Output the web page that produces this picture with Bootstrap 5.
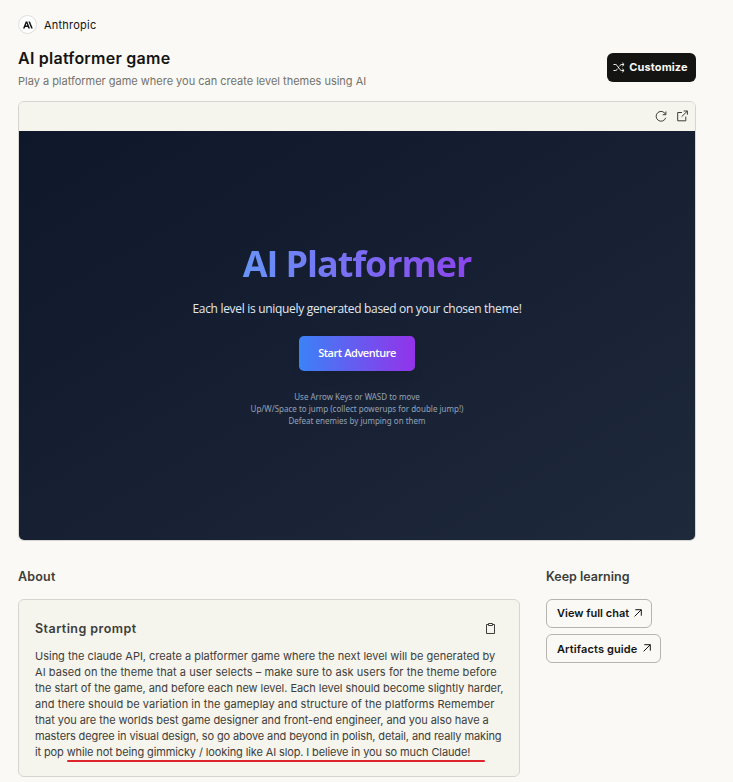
<!DOCTYPE html>
<html lang="en">
<head>
    <meta charset="UTF-8">
    <meta name="viewport" content="width=device-width, initial-scale=1.0">
    <title>AI platformer game</title>
    <link href="https://cdn.jsdelivr.net/npm/bootstrap@5.3.0/dist/css/bootstrap.min.css" rel="stylesheet">
    <style>
        :root {
            --page: #faf9f5;
            --panel: #f5f4ed;
            --line: #d6d6cf;
            --ink: #141413;
            --ink-soft: #3d3d3a;
            --ink-muted: #73726c;
        }

        body {
            background-color: var(--page);
            color: var(--ink);
            font-family: Inter, "Liberation Sans", sans-serif;
            font-size: 11px;
            line-height: 16px;
            overflow: hidden;
        }

        svg {
            display: block;
            fill: none;
            stroke: currentColor;
            flex-shrink: 0;
        }

        .page-wrap {
            width: 678px;
            margin-left: 18px;
            padding-top: 15px;
        }

        .author-logo {
            width: 19px;
            height: 19px;
            background: #fff;
            border: 1px solid #dedede;
        }

        .author-logo svg {
            fill: var(--ink);
            stroke: none;
        }

        .author-name {
            font-size: 11px;
            letter-spacing: .22px;
            padding-top: 1px;
            margin-left: 7px;
        }

        .head-row {
            height: 67px;
        }

        .page-title {
            font-size: 16px;
            line-height: 22px;
            font-weight: 600;
            letter-spacing: .24px;
            margin: 13px 0 4px;
        }

        .page-sub {
            color: var(--ink-muted);
            letter-spacing: -.015px;
        }

        .btn-custom {
            --bs-btn-bg: #141413;
            --bs-btn-color: #faf9f5;
            --bs-btn-hover-bg: #30302e;
            --bs-btn-hover-color: #fff;
            width: 89px;
            height: 29px;
            margin-top: 19px;
            padding: 0 2px 0 0;
            border: 0;
            border-radius: 6px;
            font-size: 11px;
            font-weight: 700;
            letter-spacing: .1px;
        }

        .viewer {
            height: 440px;
            border: 1px solid var(--line);
            border-radius: 6px;
        }

        .viewer-bar {
            height: 29px;
            background: var(--panel);
            color: var(--ink-soft);
            padding: 0 7px 2px 0;
            gap: 10px;
        }

        .game {
            background: linear-gradient(to bottom right, #0f172a, #1e293b);
            font-family: "Open Sans", "Noto Sans", sans-serif;
            padding-top: 109px;
        }

        .game-title {
            font-size: 36px;
            line-height: 48px;
            font-weight: 700;
            letter-spacing: -1.08px;
            margin: 0 0 11px;
            background: linear-gradient(to right, #60a5fa, #9333ea);
            background-size: 330px 100%;
            background-position: center;
            -webkit-background-clip: text;
            background-clip: text;
            color: transparent;
            width: 330px;
        }

        .game-sub {
            font-size: 12px;
            line-height: 20px;
            letter-spacing: -.31px;
            color: #e2e8f0;
            margin-bottom: 17px;
        }

        .btn-start {
            width: 116px;
            height: 35px;
            padding: 0;
            border: 0;
            border-radius: 5px;
            color: #fff;
            font-size: 11px;
            font-weight: 600;
            letter-spacing: -.45px;
            background: linear-gradient(to right, #3b82f6, #9333ea);
            box-shadow: 0 6px 10px rgba(0, 0, 0, .08);
        }

        .game-help {
            margin-top: 20px;
            font-family: "Noto Sans", sans-serif;
            font-size: 8px;
            line-height: 12px;
            color: #94a3b8;
        }

        .lower {
            margin-top: 26px;
            gap: 26px;
        }

        .section-title {
            font-size: 12.5px;
            line-height: 20px;
            font-weight: 600;
            color: var(--ink-soft);
            margin: 0 0 12px;
        }

        .about-col {
            width: 502px;
        }

        .about-col .section-title {
            letter-spacing: .2px;
        }

        .prompt-box {
            height: 178px;
            background: var(--panel);
            border: 1px solid var(--line);
            border-radius: 6px;
            padding: 19px 0 0 16px;
            color: var(--ink-soft);
        }

        .prompt-head {
            padding-right: 24px;
            margin-bottom: 9px;
        }

        .prompt-head h3 {
            font-size: 12.5px;
            line-height: 20px;
            font-weight: 600;
            letter-spacing: .45px;
            margin: 0;
        }

        .prompt-head svg {
            margin-bottom: 1px;
        }

        .fit-wide {
            letter-spacing: .06px;
        }

        .fit-normal {
            letter-spacing: -.01px;
        }

        .fit-snug {
            letter-spacing: -.05px;
        }

        .fit-tight {
            letter-spacing: -.12px;
        }

        /* hand-drawn underline, runs a little past the sentence */
        .marked::after {
            content: "";
            position: absolute;
            left: 0;
            width: 418px;
            bottom: -3px;
            height: 2px;
            border-radius: 2px;
            background: #e0242c;
        }

        .btn-link-out {
            height: 29px;
            padding: 0 0 0 10px;
            border: 1px solid #b5b4ae;
            border-radius: 6px;
            font-size: 11px;
            font-weight: 600;
            color: var(--ink);
            gap: 6px;
        }

        .btn-chat {
            width: 106px;
            margin-bottom: 6px;
        }

        .btn-chat svg {
            margin-left: -1px;
            margin-bottom: 1px;
        }

        .btn-guide {
            width: 115px;
            padding-top: 1px;
            letter-spacing: .12px;
        }

        .btn-guide svg {
            margin-bottom: 2px;
        }
    </style>
</head>
<body>
    <div class="page-wrap">
        <div class="d-flex align-items-center">
            <span class="author-logo rounded-circle d-flex align-items-center justify-content-center">
                <svg width="10" height="8" viewBox="0 0 10 8"><path fill-rule="evenodd" d="M2.7.5h1.6L7 7.5H5.4l-.6-1.6H2.2l-.6 1.6H0zM3.5 2.3 2.7 4.6h1.6zM5.4.5H7l2.8 7H8.2z"/></svg>
            </span>
            <span class="author-name">Anthropic</span>
        </div>

        <div class="head-row d-flex justify-content-between align-items-start">
            <div>
                <h1 class="page-title text-nowrap">AI platformer game</h1>
                <div class="page-sub text-nowrap">Play a platformer game where you can create level themes using AI</div>
            </div>
            <button type="button" class="btn btn-custom d-flex align-items-center justify-content-center gap-1">
                <svg width="12" height="11" viewBox="0 0 12 11"><path d="M.5 2.5h1.7c.8 0 1.3.3 1.8.9l3 4.2c.5.6 1 .9 1.8.9h2M.5 8.5h1.7c.8 0 1.3-.3 1.8-.9l.7-1M6.3 4.4l.7-1c.5-.6 1-.9 1.8-.9h2M9.3.8l1.8 1.7-1.8 1.7M9.3 6.8l1.8 1.7-1.8 1.7"/></svg>
                Customize
            </button>
        </div>

        <div class="viewer d-flex flex-column overflow-hidden">
            <div class="viewer-bar d-flex align-items-center justify-content-end">
                <svg width="12" height="12" viewBox="0 0 12 12"><path d="M10.6 4.500A4.900 4.900 0 1 0 10.700 7.800M10.900 1.500v3.200H7.700"/></svg>
                <svg width="11" height="12" viewBox="0 0 11 12"><path d="M5 2.500H.7v8.300h8.100V6.600M6.700 1h3.700v3.700M10.300 1.100 4.700 6.700"/></svg>
            </div>
            <div class="game flex-grow-1 d-flex flex-column align-items-center text-center">
                <h2 class="game-title text-nowrap">AI Platformer</h2>
                <div class="game-sub text-nowrap">Each level is uniquely generated based on your chosen theme!</div>
                <button type="button" class="btn btn-start">Start Adventure</button>
                <div class="game-help">
                    Use Arrow Keys or WASD to move<br>
                    Up/W/Space to jump (collect powerups for double jump!)<br>
                    Defeat enemies by jumping on them
                </div>
            </div>
        </div>

        <div class="lower d-flex">
            <div class="about-col">
                <h2 class="section-title">About</h2>
                <div class="prompt-box">
                    <div class="prompt-head d-flex align-items-center justify-content-between">
                        <h3>Starting prompt</h3>
                        <svg width="9" height="11" viewBox="0 0 9 11"><path d="M2.5 1.5h-2v9h8v-9h-2M2.5.5h4v2h-4z"/></svg>
                    </div>
                    <div class="text-nowrap">
                        <div class="fit-normal">Using the claude API, create a platformer game where the next level will be generated by</div>
                        <div class="fit-wide">AI based on the theme that a user selects – make sure to ask users for the theme before</div>
                        <div class="fit-snug">the start of the game, and before each new level. Each level should become slightly harder,</div>
                        <div class="fit-wide">and there should be variation in the gameplay and structure of the platforms Remember</div>
                        <div class="fit-snug">that you are the worlds best game designer and front-end engineer, and you also have a</div>
                        <div class="fit-tight">masters degree in visual design, so go above and beyond in polish, detail, and really making</div>
                        <div class="fit-tight">it pop <span class="marked position-relative">while not being gimmicky / looking like AI slop. I believe in you so much Claude!</span></div>
                    </div>
                </div>
            </div>
            <div>
                <h2 class="section-title">Keep learning</h2>
                <a href="#" class="btn btn-link-out btn-chat d-flex align-items-center text-nowrap">
                    View full chat
                    <svg width="8" height="8" viewBox="0 0 8 8"><path d="M1.3.7h6v6M7.2.8.6 7.4"/></svg>
                </a>
                <a href="#" class="btn btn-link-out btn-guide d-flex align-items-center text-nowrap">
                    Artifacts guide
                    <svg width="8" height="8" viewBox="0 0 8 8"><path d="M1.3.7h6v6M7.2.8.6 7.4"/></svg>
                </a>
            </div>
        </div>
    </div>
    <script src="https://cdn.jsdelivr.net/npm/bootstrap@5.3.0/dist/js/bootstrap.bundle.min.js"></script>
</body>
</html>
